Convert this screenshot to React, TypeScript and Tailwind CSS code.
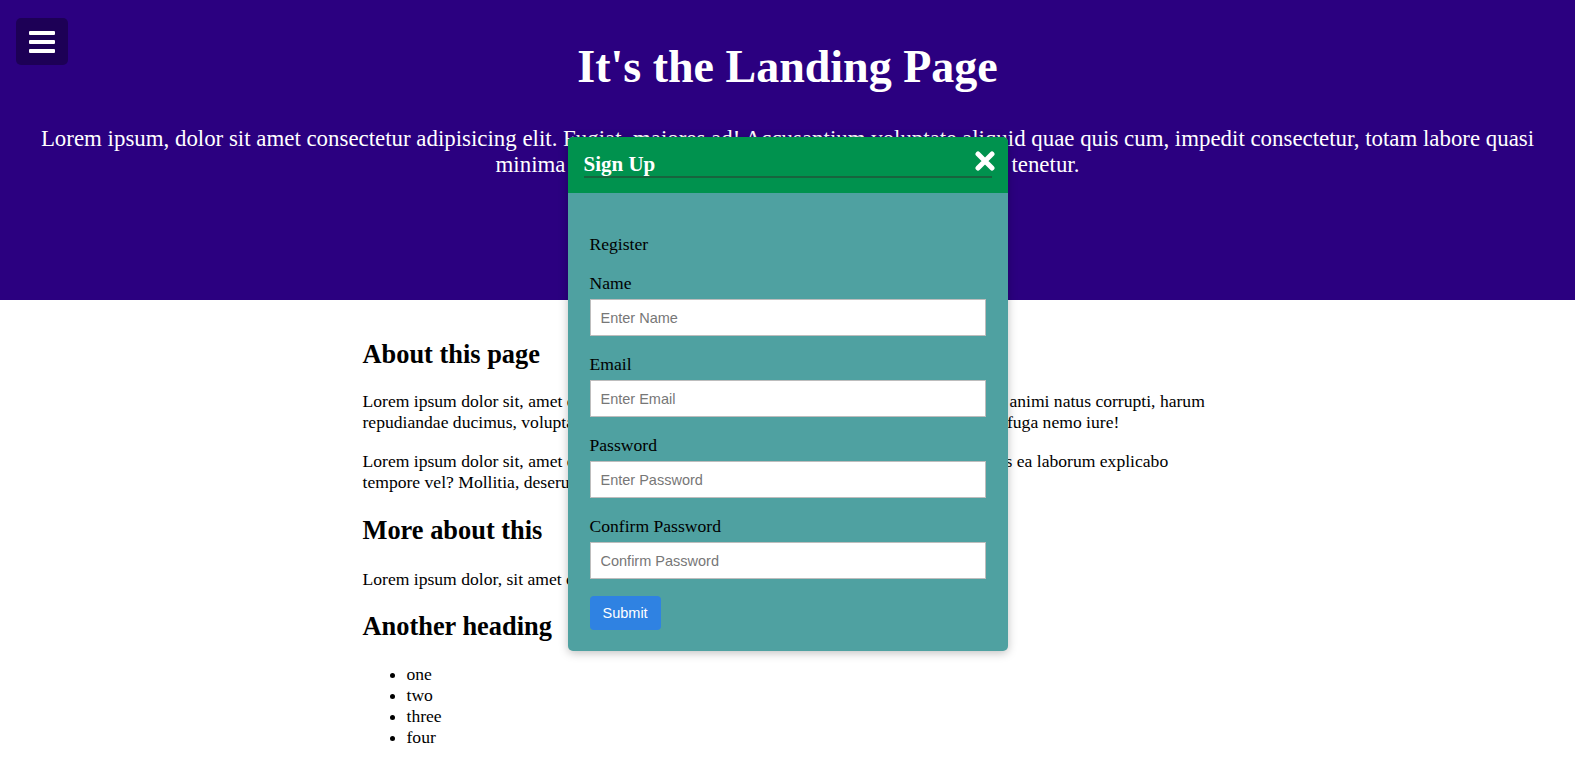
import { useState } from 'react';

const fields = [
  { id: 'name', label: 'Name', placeholder: 'Enter Name', type: 'text' },
  { id: 'email', label: 'Email', placeholder: 'Enter Email', type: 'email' },
  { id: 'password', label: 'Password', placeholder: 'Enter Password', type: 'password' },
  { id: 'confirm', label: 'Confirm Password', placeholder: 'Confirm Password', type: 'password' },
];

function CloseIcon() {
  return (
    <svg width="20" height="20" viewBox="0 0 20 20" fill="none" stroke="white" strokeWidth="5" strokeLinecap="round">
      <path d="M3 3 17 17M17 3 3 17" />
    </svg>
  );
}

export default function App() {
  const [open, setOpen] = useState(true);

  return (
    <div className="min-h-screen bg-white text-[17.6px] leading-[normal] text-black font-['Liberation_Serif','Times_New_Roman',serif]">
      <header className="relative h-[300px] bg-[#2b0080] px-10 pt-[40px] text-center text-white">
        <button className="absolute left-[16px] top-[18px] flex h-[47px] w-[52px] flex-col items-center justify-center gap-[5px] rounded-[5px] bg-[#1d0056]">
          <span className="h-[4px] w-[26px] rounded-[1px] bg-white" />
          <span className="h-[4px] w-[26px] rounded-[1px] bg-white" />
          <span className="h-[4px] w-[26px] rounded-[1px] bg-white" />
        </button>
        <h1 className="text-[46px] font-bold leading-[53px]">It's the Landing Page</h1>
        <p className="mt-[33px] text-[22.88px] leading-[normal]">
          Lorem ipsum, dolor sit amet consectetur adipisicing elit. Fugiat, maiores ad! Accusantium voluptate aliquid quae quis cum, impedit consectetur, totam labore quasi minima nesciunt repellendus quibusdam iste, a dolorem tenetur.
        </p>
      </header>

      <main className="mx-auto w-[850px] pt-[16px]">
        <h2 className="mt-[23px] mb-[21px] text-[26.4px] font-bold">About this page</h2>
        <p className="my-[17.6px]">
          Lorem ipsum dolor sit, amet consectetur adipisicing elit. Quasi quisquam labore deleniti, et animi natus corrupti, harum repudiandae ducimus, voluptatem accusantium quod perspiciatis, ratione dolore sed ipsam, fuga nemo iure!
        </p>
        <p className="my-[17.6px]">
          Lorem ipsum dolor sit, amet consectetur adipisicing elit. Quae, perferendis nam dignissimos ea laborum explicabo tempore vel? Mollitia, deserunt eius aliquam nihil.
        </p>
        <h2 className="mt-[22px] mb-[23px] text-[26.4px] font-bold">More about this</h2>
        <p className="my-[17.6px]">Lorem ipsum dolor, sit amet consectetur adipisicing elit. Nulla, minus.</p>
        <h2 className="mt-[21px] mb-[22px] text-[26.4px] font-bold">Another heading</h2>
        <ul className="list-disc pl-[44px]">
          <li>one</li>
          <li>two</li>
          <li>three</li>
          <li>four</li>
        </ul>
      </main>

      {open && (
        <div className="absolute left-1/2 top-[137px] w-[440px] -translate-x-1/2 overflow-hidden rounded-[5px] bg-[#4fa1a1] shadow-[0_2px_10px_rgba(0,0,0,0.25)]">
          <div className="relative bg-[#00924e] px-[16px] pt-[15px] pb-[15px]">
            <h2 className="border-b-2 border-[#17643e] text-[21px] font-bold leading-[24px] text-white">Sign Up</h2>
            <button className="absolute right-[13px] top-[14px]" onClick={() => setOpen(false)}>
              <CloseIcon />
            </button>
          </div>
          <form className="px-[22px] pt-[41px] pb-[21px]" onSubmit={(e) => e.preventDefault()}>
            <p className="mb-[19px] leading-[20px]">Register</p>
            {fields.map((f, i) => (
              <div key={f.id} className={i === fields.length - 1 ? 'mb-[17px]' : 'mb-[18px]'}>
                <label htmlFor={f.id} className="mb-[6px] block leading-[20px]">
                  {f.label}
                </label>
                <input
                  id={f.id}
                  type={f.type}
                  placeholder={f.placeholder}
                  className="block h-[37px] w-full border border-[#bdbdbd] bg-white px-[10px] font-['Liberation_Sans',Arial,sans-serif] text-[14.5px] placeholder:text-[#777]"
                />
              </div>
            ))}
            <button className="h-[34px] rounded-[4px] bg-[#2f82e2] px-[13px] font-['Liberation_Sans',Arial,sans-serif] text-[14.5px] text-white">
              Submit
            </button>
          </form>
        </div>
      )}
    </div>
  );
}
